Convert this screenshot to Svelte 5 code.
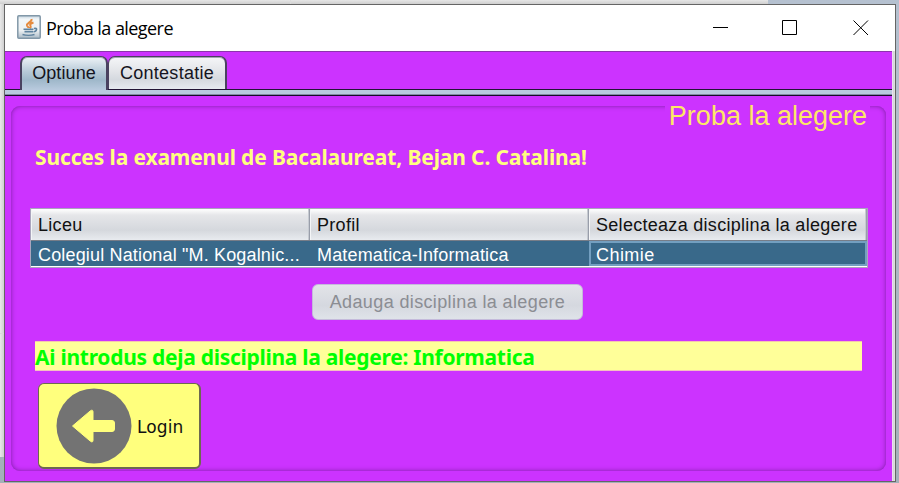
<script>
  const tabs = ['Optiune', 'Contestatie'];
  const columns = ['Liceu', 'Profil', 'Selecteaza disciplina la alegere'];
  const row = ['Colegiul National "M. Kogalnic...', 'Matematica-Informatica', 'Chimie'];
  let active = $state(0);
</script>

<div class="desktop">
  <div class="window">
    <header class="titlebar">
      <svg class="java" width="24" height="24" viewBox="0 0 24 24">
        <defs>
          <linearGradient id="jg" x1="0" y1="0" x2="0" y2="1">
            <stop offset="0" stop-color="#c3d3df" /><stop offset=".15" stop-color="#f2f6f8" />
            <stop offset=".65" stop-color="#edf1f3" /><stop offset="1" stop-color="#a9bac6" />
          </linearGradient>
        </defs>
        <rect x=".8" y=".8" width="22.4" height="22.4" rx="1" fill="url(#jg)" stroke="#8298a8" stroke-width="1.5" />
        <path d="M14.500 4c1 3-5 3.700-4.500 6.500.3 1 1.500 1.500 1.500 2.500M16.500 7.500c-3 1-4 2-3 3.300.7 1 .2 1.700-.7 2.500" fill="none" stroke="#e58b3e" stroke-width="2" />
        <path d="M6.500 14.200h10M7.500 16.600h8.500M5.500 19.500c3 1 9 1 12 0M17 13.500c4-1 3 3-.5 3.300" fill="none" stroke="#5f839f" stroke-width="1.600" />
      </svg>
      <span class="caption">Proba la alegere</span>
      <svg class="controls" width="158" height="18" viewBox="0 0 158 18">
        <path d="M0 9.500h15M69.500 2.500h14v14h-14zM140.500 2.500l14.500 14.500M155 2.500l-14.500 14.500" fill="none" stroke="#000" stroke-width="1" />
      </svg>
    </header>

    <main class="client">
      <nav class="tabs">
        {#each tabs as tab, i}
          <button class="tab" class:active={active === i} onclick={() => (active = i)}><span>{tab}</span></button>
        {/each}
      </nav>
      <div class="divider"></div>

      <section class="panel">
        <h1><span>Proba la alegere</span></h1>
        <p class="greeting"><span>Succes la examenul de Bacalaureat, Bejan C. Catalina!</span></p>
        <div class="table">
          <div class="cells head">
            {#each columns as c}<div class="cell"><span>{c}</span></div>{/each}
          </div>
          <div class="cells data">
            {#each row as c, i}<div class="cell" class:focused={i === 2}><span>{c}</span></div>{/each}
          </div>
        </div>
        <button class="add" disabled><span>Adauga disciplina la alegere</span></button>
        <p class="message"><span>Ai introdus deja disciplina la alegere: Informatica</span></p>
        <button class="login">
          <svg width="76" height="76" viewBox="0 0 76 76">
            <circle cx="38" cy="38" r="37.500" fill="#737373" />
            <path d="M16.500 38L34.500 22.700q2.500-1.500 2.500 1.300v8.500h19q2.500 0 2.500 2.500v6q0 2.500-2.500 2.500h-19V52q0 3-2.500 1.300z" fill="#ffff7d" stroke="#ffff7d" stroke-linejoin="round" />
          </svg>
          <span>Login</span>
        </button>
      </section>
    </main>
  </div>
</div>

<style>
  * { box-sizing: border-box; }
  .desktop {
    width: 899px; height: 483px; padding: 4px 3px 1px 4px; overflow: hidden;
    background:
      linear-gradient(90deg, #d3d3d3, #e4e4e4) 290px 0 / 1px 4px no-repeat,
      linear-gradient(#e6e6e6, #cfcfcf) 0 0 / 768px 4px no-repeat,
      linear-gradient(#dadada, #dadada) 0 333px / 4px 1px no-repeat,
      linear-gradient(90deg, #e9e9e9, #d0d0d0) 0 0 / 4px 457px no-repeat,
      linear-gradient(#b5c1d0, #a3b0b9);
    font: 18px "Liberation Sans", Arial, sans-serif;
  }
  .window { width: 892px; height: 478px; border: 1px solid #656565; background: #fff; display: flex; flex-direction: column; }
  span { white-space: pre; display: inline-block; }
  .titlebar { height: 46px; flex: none; display: flex; align-items: center; padding: 0 17px 0 12px; }
  .java { margin-top: -2px; }
  .caption { margin-left: 5px; font: 18px "Open Sans", sans-serif; letter-spacing: -.56px; color: #000; }
  .controls { margin-left: auto; margin-right: 7px; margin-top: -2px; }
  .client {
    flex: 1; margin-right: 3px; border-top: 1px solid #8c35ad; background: #cc33ff;
    box-shadow: 1px 0 #e9dfef, 2px 0 #d6d6da, 3px 0 #dedede;
    display: flex; flex-direction: column;
  }
  .tabs { height: 37px; flex: none; padding: 4px 0 0 15px; display: flex; }
  button { font: inherit; padding: 0; margin: 0; }
  .tab {
    height: 33px; width: 119px; padding-top: 1px; border: 1px solid #4a4260; border-width: 1px 2px 0 1px; border-radius: 7px 7px 0 0;
    background: linear-gradient(#f5f6f8, #e2e4e8 45%, #d5d9df 70%, #e6eaf0); color: #141420; letter-spacing: .28px;
    box-shadow: inset 0 1px #a5a4b4;
  }
  .tab.active {
    width: 88px; height: 34px; padding-bottom: 1px; border-left-width: 2px; letter-spacing: .1px; z-index: 1;
    background: linear-gradient(#eef3f7, #b6c9d7 45%, #9fb8ca 70%, #b9cade);
  }
  .divider { height: 7px; flex: none; background: linear-gradient(#b9cade 4px, #8388a4 4px); border-top: 1px solid #221536; border-bottom: 1px solid #160b29; }
  .panel {
    width: 875px; height: 365px; margin: 10px 0 0 6px; border-radius: 9px; padding: 0 19px 0 19px;
    box-shadow: inset 0 0 5px #8220a8, inset 0 0 1px #9d2cc8;
    display: flex; flex-direction: column; align-items: flex-start;
  }
  h1 { align-self: flex-end; margin: -6px -3px 0 0; height: 31px; padding: 0 3px 0 4px; background: #c3f; font-size: 27px; line-height: 32px; font-weight: 400; color: #fde865; flex: none; }
  .greeting, .message { margin: 0; font: 700 21px/30px "Noto Sans", sans-serif; letter-spacing: -.13px; flex: none; }
  .greeting { margin: 11px 0 0 5px; height: 30px; color: #ffff80; }
  .table { width: 838px; height: 60px; margin: 36px 0 0; border: 1px solid #aaa5bd; background: #fff; flex: none; }
  .cells { display: grid; grid-template-columns: 279px 279px 278px; }
  .head { grid-auto-rows: 31px; height: 32px; background: linear-gradient(#fff, #e5e6e9 20%, #d5d8dd 68%, #e8ebef); border-bottom: 1px solid #777d88; color: #111; letter-spacing: .29px; }
  .cell { padding-left: 7px; display: flex; align-items: center; }
  .head .cell { padding-top: 2px; border-right: 1px solid #999eaa; box-shadow: inset -1px 0 #c6cad1, inset 1px 0 #f4f5f7; }
  .data { grid-auto-rows: 25px; height: 25px; background: #39698a; color: #fff; letter-spacing: .16px; }
  .data .cell { padding-top: 4px; }
  .data .focused { border: 2px solid #739fc0; padding: 3px 0 0 5px; letter-spacing: .45px; }
  .add { width: 271px; height: 36px; margin: 16px 0 0 282px; border: 1px solid #c4badb; border-radius: 6px; background: linear-gradient(#e2e4e8, #d5d8df 60%, #dfe3e9); color: #8b8d93; letter-spacing: .37px; flex: none; }
  .add span { padding-top: 1px; }
  .message { width: 827px; height: 30px; margin: 21px 0 0 5px; background: #ffff99; color: #00ff00; box-shadow: inset 0 1px #f5c6ad, inset 0 -1px #f5c0c2; line-height: 32px; letter-spacing: -.28px; flex: none; }
  .login { width: 163px; height: 86px; margin: 12px 0 0 8px; padding: 1px 0 0 17px; border: 1px solid #6d6851; border-width: 1px 2px 2px 1px; border-radius: 6px; background: #ffff7d; display: flex; align-items: center; color: #111; flex: none; }
  .login span { margin: 2px 0 0 5px; font: 17px "DejaVu Sans", sans-serif; letter-spacing: .1px; }
</style>
